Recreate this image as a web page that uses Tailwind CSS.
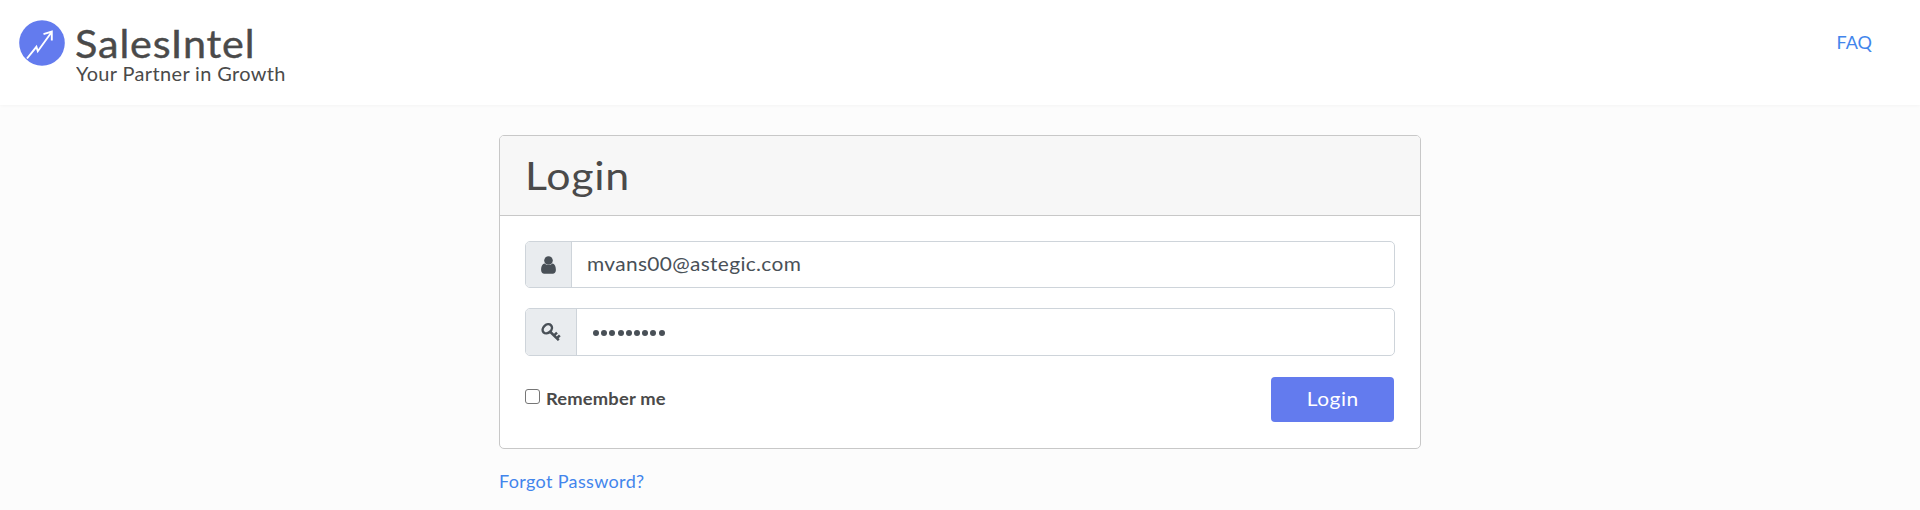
<!DOCTYPE html>
<html lang="en">
<head>
<meta charset="utf-8">
<title>SalesIntel Login</title>
<script src="https://cdn.jsdelivr.net/npm/@tailwindcss/browser@4"></script>
</head>
<body class="h-[510px] overflow-hidden bg-[#fcfcfc] font-['Lato','Open_Sans',sans-serif] text-[#4a4a4a]">
<header class="flex h-[105px] items-start justify-between bg-white pl-[19px] pr-12 pt-5 shadow-[0_1px_3px_rgba(0,0,0,0.03)]">
  <div class="flex">
    <svg class="h-[46px] w-[46px]" viewBox="0 0 46 46" fill="none"><circle cx="23" cy="23" r="22.8" fill="#637bee"/><path d="M8 38.5 17.4 26.8 18.8 31.2 32.5 12.2M24.5 14.2 32.8 11.6 32.8 20.6" stroke="#fff" stroke-width="1.9"/></svg>
    <div class="ml-[10px] whitespace-nowrap">
      <div class="h-[42px] w-fit origin-left scale-x-[1.06] text-[39px] leading-[46px] tracking-[0.8px] [-webkit-text-stroke:0.4px_#4a4a4a]">SalesIntel</div>
      <div class="w-fit origin-left scale-x-[1.05] pl-px text-[19px] leading-6 tracking-[0.35px]">Your Partner in Growth</div>
    </div>
  </div>
  <a href="#" class="mt-[10px] text-lg leading-6 text-[#4285ec]">FAQ</a>
</header>
<main class="ml-[499px] w-[922px] pt-[30px]">
  <section class="h-[314px] overflow-hidden rounded-[5px] border border-[#c8c8c8] bg-white">
    <div class="h-20 border-b border-[#c8c8c8] bg-[#f7f7f7] pl-[25px]">
      <h1 class="w-fit origin-left scale-x-[1.1] text-[39px] leading-[78px] tracking-[0.7px]">Login</h1>
    </div>
    <form class="px-[25px] pt-[25px]">
      <div class="flex h-[47px] overflow-hidden rounded-[5px] border border-[#ced4da] text-[#495057]">
        <span class="flex w-[46px] items-center justify-center border-r border-[#ced4da] bg-[#e9ecef]"><svg class="h-[18px] w-[15px]" viewBox="0 0 15 18" fill="currentColor"><circle cx="7.5" cy="4.5" r="4.3"/><path d="M3.6 7.5C1 7.8.1 11 .1 14.1.1 16.4 1.5 17.8 3.3 17.8h8.4c1.8 0 3.2-1.4 3.2-3.7 0-3.1-.9-6.3-3.5-6.6a5.5 5.5 0 0 1-7.8 0Z"/></svg></span>
        <span class="ml-[15px] origin-left scale-x-[1.1] text-[19px] leading-[44px] tracking-[0.3px]">mvans00@astegic.com</span>
      </div>
      <div class="mt-5 flex h-12 overflow-hidden rounded-[5px] border border-[#ced4da] text-[#495057]">
        <span class="flex w-[51px] items-center justify-center border-r border-[#ced4da] bg-[#e9ecef]"><svg class="h-[18px] w-[20px]" viewBox="0 0 20 18" fill="none" stroke="currentColor"><ellipse cx="6.3" cy="5.8" rx="5.1" ry="4" transform="rotate(-43 6.3 5.8)" stroke-width="2.5"/><path d="M9.4 9 17.8 17.2M13.3 12.2 16 9.7M16.1 15 18.8 12.3" stroke-width="2.5"/></svg></span>
        <span class="flex items-center gap-[2.2px] pl-4 pt-px">
          <i class="size-1.5 rounded-full bg-current"></i><i class="size-1.5 rounded-full bg-current"></i><i class="size-1.5 rounded-full bg-current"></i><i class="size-1.5 rounded-full bg-current"></i><i class="size-1.5 rounded-full bg-current"></i><i class="size-1.5 rounded-full bg-current"></i><i class="size-1.5 rounded-full bg-current"></i><i class="size-1.5 rounded-full bg-current"></i><i class="size-1.5 rounded-full bg-current"></i>
        </span>
      </div>
      <div class="mt-[21px] flex items-start justify-between pr-px">
        <label class="flex pt-3 text-[17px] font-bold leading-5"><input type="checkbox" class="mr-[6px] size-[15px] appearance-none rounded-[3px] border border-[#767676] bg-white"><span class="origin-left scale-x-[1.08] tracking-[0.15px]">Remember me</span></label>
        <button type="button" class="h-[45px] w-[123px] rounded-[4px] bg-[#637bee] pb-0.5 text-[19px] leading-6 text-white"><span class="inline-block scale-x-[1.1] tracking-[0.5px]">Login</span></button>
      </div>
    </form>
  </section>
  <a href="#" class="mt-5 block w-fit text-lg leading-6 tracking-[0.35px] text-[#4285ec]">Forgot Password?</a>
</main>
</body>
</html>
